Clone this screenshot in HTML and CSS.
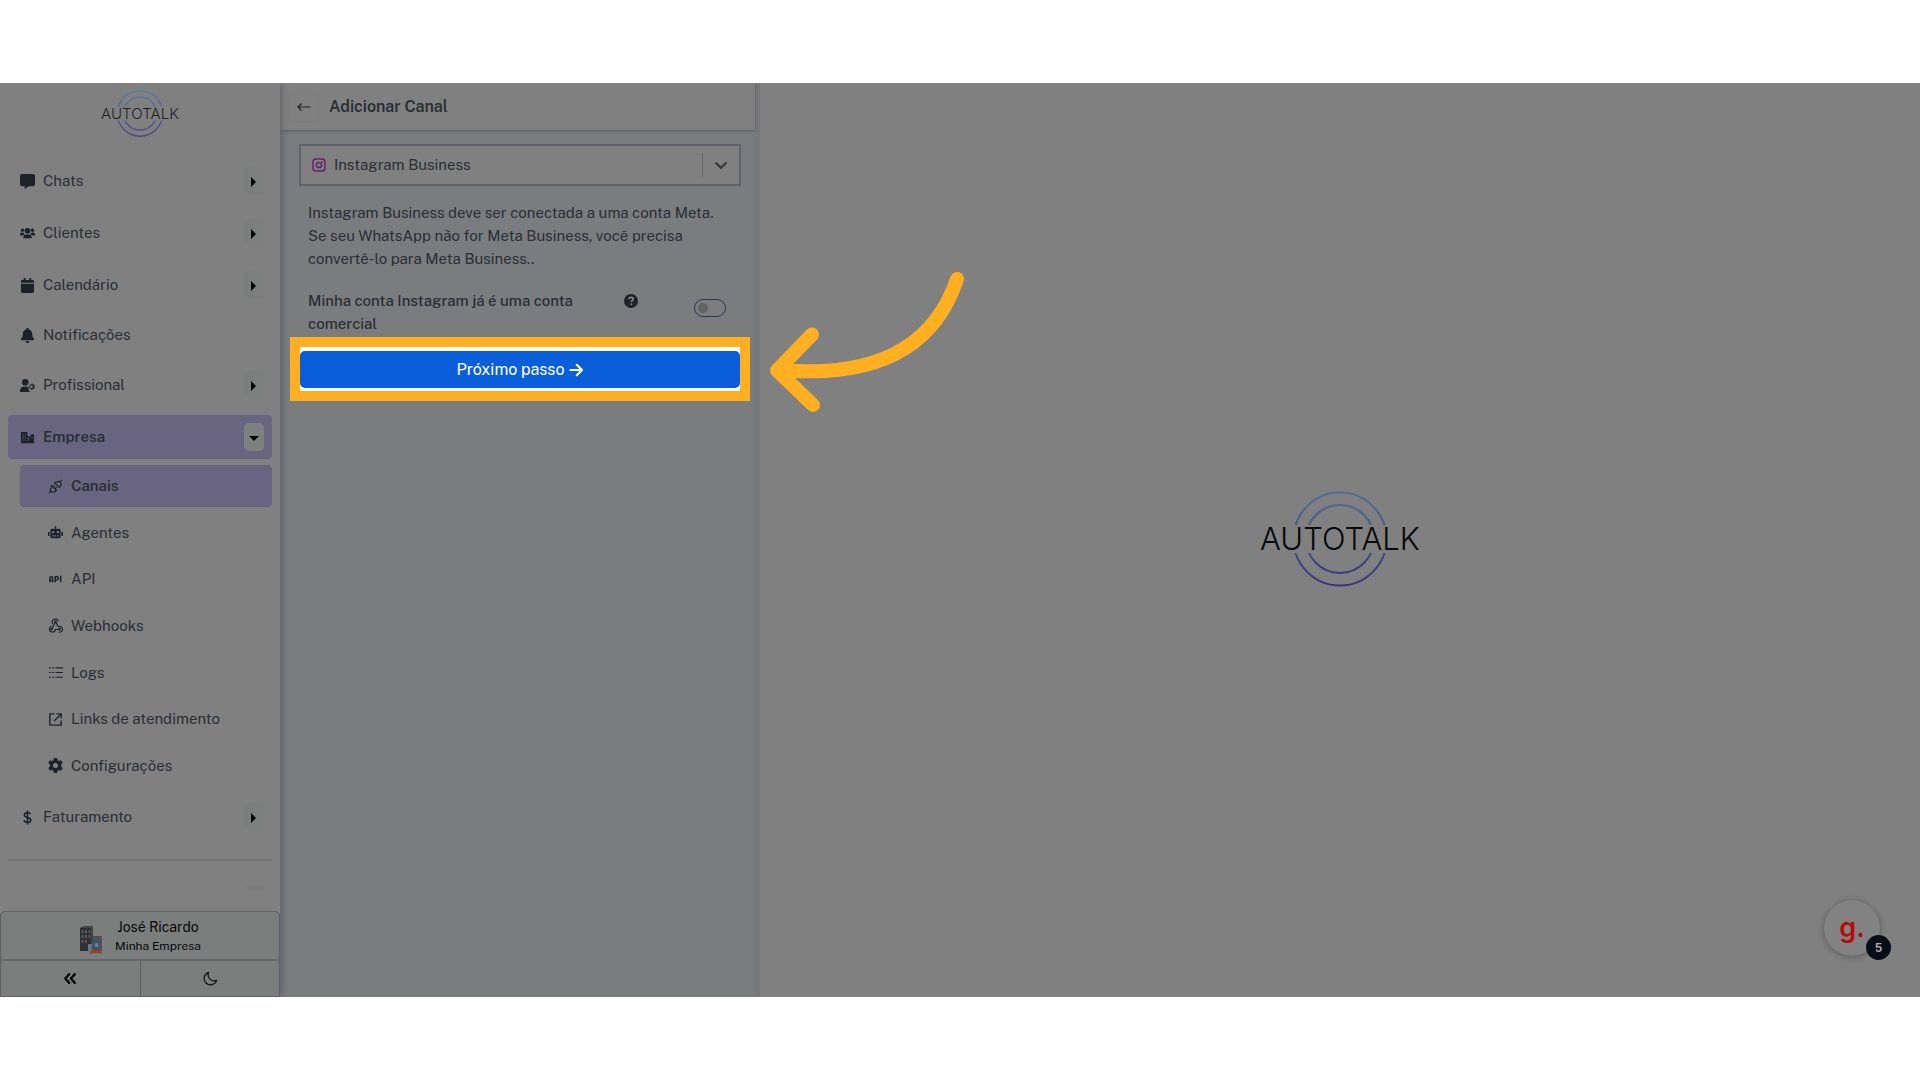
FILE: index.html
```html
<!DOCTYPE html>
<html lang="pt-BR">
<head>
<meta charset="utf-8">
<meta name="viewport" content="width=device-width, initial-scale=1">
<title>Autotalk - Adicionar Canal</title>
<link rel="stylesheet" href="styles.css">
</head>
<body>
<svg class="defs" aria-hidden="true">
  <defs>
    <linearGradient id="ring-dark" gradientUnits="userSpaceOnUse" x1="0" y1="2" x2="0" y2="98"><stop offset="0" stop-color="#4f6f94"/><stop offset="1" stop-color="#3a2f7c"/></linearGradient>
    <linearGradient id="ring-light" gradientUnits="userSpaceOnUse" x1="0" y1="2" x2="0" y2="98"><stop offset="0" stop-color="#5f7c9c"/><stop offset="1" stop-color="#4d4284"/></linearGradient>
    <clipPath id="ring-clip"><path d="M0 0h164v34H0zM0 62h164v38H0z"/></clipPath>
  </defs>
</svg>
<div class="stage">
  <aside class="sidebar">
    <a class="brand" href="#" aria-label="Autotalk">
      <svg class="logo logo-small" viewBox="0 0 164 98">
        <g clip-path="url(#ring-clip)" fill="none" stroke="url(#ring-light)" stroke-width="3"><circle cx="82" cy="48" r="46.500"/><circle cx="82" cy="48" r="34"/></g>
        <text x="82" y="59" text-anchor="middle">AUTOTALK</text>
      </svg>
    </a>
    <nav class="nav">
      <div class="item"><a href="#"><svg viewBox="0 0 16 16"><path d="M2 0h12a2 2 0 0 1 2 2v9a2 2 0 0 1-2 2H9l-4 3v-3H2a2 2 0 0 1-2-2V2a2 2 0 0 1 2-2z"/></svg>Chats</a><button class="caret" aria-label="Abrir Chats"></button></div>
      <div class="item"><a href="#"><svg viewBox="0 0 16 16"><circle cx="8" cy="5" r="3"/><circle cx="2.700" cy="4.500" r="1.800"/><circle cx="13.300" cy="4.500" r="1.800"/><path d="M3.500 13v-1.500A3 3 0 0 1 6.500 9h3a3 3 0 0 1 3 2.500V13zM0 10V9a2 2 0 0 1 2-2h1.500l1.500 1.500L3 10zM16 10V9a2 2 0 0 0-2-2h-1.500L11 8.500l2 1.500z"/></svg>Clientes</a><button class="caret" aria-label="Abrir Clientes"></button></div>
      <div class="item"><a href="#"><svg viewBox="0 0 16 16"><path d="M1 5V3.500A1.500 1.500 0 0 1 2.500 2H4V0h2v2h4V0h2v2h1.500A1.500 1.500 0 0 1 15 3.500V5zM1 6h14v8.500a1.500 1.500 0 0 1-1.500 1.500h-11A1.500 1.500 0 0 1 1 14.500z"/></svg>Calendário</a><button class="caret" aria-label="Abrir Calendário"></button></div>
      <div class="item plain"><a href="#"><svg viewBox="0 0 16 16"><path d="M7 0h2v1.200c2.300.5 4 2.400 4 4.800 0 3 .8 4 1.700 5 .7.900.2 2-.7 2H2c-.9 0-1.400-1.100-.7-2C2.200 10 3 9 3 6c0-2.400 1.700-4.300 4-4.800zM6 14h4a2 2 0 0 1-4 0z"/></svg>Notificações</a></div>
      <div class="item"><a href="#"><svg viewBox="0 0 16 16"><circle cx="5.600" cy="4.500" r="3.500"/><path d="M0 15v-1.500A4.500 4.500 0 0 1 4.500 9h2.300c.9 0 1.700.3 2.400.7-.5 1.700 0 3.800 1.300 5.300z"/><path fill-rule="evenodd" d="M12 6h1.500l.3 1.100 1.200-.3.900 1.400-.9.900.9 1-.9 1.500-1.200-.3-.3 1.200H12l-.4-1.200-1.100.3-.9-1.500.8-1-.8-.9.900-1.400 1.100.3zM12.700 7.900a1.400 1.400 0 1 0 0 2.700 1.400 1.400 0 0 0 0-2.700z"/></svg>Profissional</a><button class="caret" aria-label="Abrir Profissional"></button></div>
      <div class="item active"><a href="#"><svg viewBox="0 0 16 16"><path fill-rule="evenodd" d="M1 14V3a1 1 0 0 1 1-1h5a1 1 0 0 1 1 1v3.500h2V8l2-3.500h2a1 1 0 0 1 1 1V14zM2.800 4.500v1.200H4V4.500zm2.400 0v1.200h1.200V4.500zM2.800 7.200v1.200H4V7.200zm2.400 0v1.200h1.200V7.200zM2.800 10v1.200H4V10zm2.400 0v1.200h1.200V10zM12.300 7.500v1.200h1.200V7.500zM8.300 8v3.500h1V8z"/></svg>Empresa</a><button class="caret open" aria-label="Fechar Empresa"></button></div>
      <div class="submenu">
        <a class="sub active" href="#"><svg class="line" viewBox="0 0 16 16"><path d="M1 15l2.300-2.300M15 1l-2.300 2.300M4 7l5 5-1.500 1.300c-1.300 1.100-3 .8-4-.2s-1.300-2.700-.2-4zM7 4l5 5 1.300-1.500c1.100-1.300.8-3-.2-4s-2.700-1.300-4-.2zM5.500 8.500L7.300 6.700M7.500 10.500l1.800-1.800"/></svg>Canais</a>
        <a class="sub" href="#"><svg viewBox="0 0 16 16"><path fill-rule="evenodd" d="M7.300 1h1.400v3H12a1.500 1.500 0 0 1 1.500 1.500v7A1.500 1.500 0 0 1 12 14H4a1.500 1.500 0 0 1-1.500-1.500v-7A1.500 1.500 0 0 1 4 4h3.300zM5.500 6.500a1.200 1.200 0 1 0 0 2.400 1.200 1.200 0 0 0 0-2.400zm5 0a1.200 1.200 0 1 0 0 2.400 1.200 1.200 0 0 0 0-2.400zM4.500 11v1.200H6V11zm2.700 0v1.200h1.500V11zm2.600 0v1.200h1.500V11zM0 7.500h1.700v4.300H1a1 1 0 0 1-1-1zM16 7.500h-1.700v4.300h.7a1 1 0 0 0 1-1z"/></svg>Agentes</a>
        <a class="sub" href="#"><svg class="line" viewBox="0 0 16 16"><path stroke-width="1.600" d="M2 11V6.500a1.500 1.500 0 0 1 3 0V11M2 9h3M7.700 11V5h1.600a1.500 1.500 0 0 1 0 3.500H7.700M13.500 4v7"/></svg>API</a>
        <a class="sub" href="#"><svg class="line" viewBox="0 0 16 16"><path d="M5.200 6.500A3.300 3.300 0 1 1 11 3.700M8 4l3 5.300a3.100 3.100 0 1 1 .3 5.700M4 8.500a3.300 3.300 0 1 0 4.100 3.700h4.400M8 4L4.700 10.500l-1.500 1.700"/><circle cx="8" cy="4" r=".8"/><circle cx="3.700" cy="12" r=".8"/><circle cx="12.500" cy="12" r=".8"/></svg>Webhooks</a>
        <a class="sub" href="#"><svg class="line" viewBox="0 0 16 16"><path d="M1 3h2M1 8h2M1 13h2M4.500 3h2M4.500 8h2M4.500 13h2M8 3h8M8 8h8M8 13h8"/></svg>Logs</a>
        <a class="sub" href="#"><svg class="line" viewBox="0 0 16 16"><path stroke-width="1.500" d="M7 2H2v12h12V9M9 2h5v5M14 2L6.500 9.500"/></svg>Links de atendimento</a>
        <a class="sub" href="#"><svg viewBox="0 0 16 16"><path fill-rule="evenodd" d="M6.300 0h3.400l.6 2.300 1.400.8 2.300-.7 1.700 3L14 7v2l1.700 1.600-1.700 3-2.300-.7-1.400.8-.6 2.300H6.300l-.6-2.300-1.400-.8-2.300.7-1.700-3L2 9V7L.3 5.400l1.700-3 2.300.7 1.400-.8zM8 5.300a2.700 2.700 0 1 0 0 5.400 2.700 2.700 0 0 0 0-5.400z"/></svg>Configurações</a>
      </div>
      <div class="item"><a href="#"><svg class="line" viewBox="0 0 16 16"><path stroke-width="1.600" d="M11.300 4.600C10.800 3.300 9.700 2.700 8 2.700c-2 0-3.300 1-3.300 2.500C4.700 8.800 11.500 7 11.500 10.700c0 1.600-1.400 2.600-3.500 2.600-1.900 0-3.200-.8-3.600-2.300M8 .5v15"/></svg>Faturamento</a><button class="caret" aria-label="Abrir Faturamento"></button></div>
      <hr class="rule">
      <div class="item"><button class="caret" aria-label="Abrir mais"></button></div>
    </nav>
    <footer class="account">
      <a class="profile" href="#">
        <svg viewBox="0 0 24 30"><path fill="#454548" d="M1 3l3-2h10v25H1z"/><path fill="#303034" d="M1 3h11v23H1z"/><path fill="#56575e" d="M2.500 5h2v3h-2zm3.500 0h2v3H6zM2.500 10h2v3h-2zM6 10h2v3H6zm-3.500 5h2v3h-2zM6 15h2v3H6zm3.500-10h2v3h-2zm0 5h2v3h-2z"/><path fill="#515157" d="M14 11h9v15h-9z"/><path fill="#697782" d="M9 19h4v8H9z"/><path fill="#9c4414" d="M11 29c0-3 2-5 4-5h4c2 0 4 2 4 5l-4-1h-4z"/><path fill="#405365" d="M17.500 14c3 1 4 4 4 7 0 2-1 4-2 5h-4c-1-1-2-3-2-5 0-3 1-6 4-7z"/><circle cx="17.500" cy="20" r="2" fill="#71828e"/></svg>
        <span class="names"><span class="person">José Ricardo</span><span class="company">Minha Empresa</span></span>
      </a>
      <div class="tools">
        <button aria-label="Recolher menu"><svg viewBox="0 0 16 16" fill="none" stroke="#050505" stroke-width="2.700" stroke-linejoin="round" stroke-linecap="round"><path d="M6.500 3.500L2.500 8l4 4.500M12.500 3.500L8.500 8l4 4.500"/></svg></button>
        <button aria-label="Modo escuro"><svg viewBox="0 0 16 16" fill="none" stroke="#101214" stroke-width="1.300" stroke-linejoin="round"><path d="M6 1.500a6.500 6.500 0 0 0 8.500 8.500A6.800 6.800 0 1 1 6 1.500z"/></svg></button>
      </div>
    </footer>
  </aside>

  <section class="panel">
    <header class="panel-head">
      <button class="back" aria-label="Voltar"><svg viewBox="0 0 14 14" fill="none" stroke="#1c2024" stroke-width="1.200"><path d="M13.500 7H1M4.500 3.500L1 7l3.500 3.500"/></svg></button>
      <h1>Adicionar Canal</h1>
    </header>
    <form class="panel-body">
      <div class="picker">
        <svg class="insta" viewBox="0 0 14 14" fill="none" stroke="#64206a" stroke-width="1.500"><rect x="1" y="1" width="12" height="12" rx="3"/><circle cx="7" cy="7" r="2.600"/><path d="M10 4h1"/></svg>
        <select aria-label="Tipo de canal"><option>Instagram Business</option></select>
        <svg class="chevron" viewBox="0 0 12 12" fill="none" stroke="#373a3e" stroke-width="2" stroke-linecap="round"><path d="M2 4.500L6 8.500 10 4.500"/></svg>
      </div>
      <p class="info">Instagram Business deve ser conectada a uma conta Meta. Se seu WhatsApp não for Meta Business, você precisa convertê-lo para Meta Business..</p>
      <div class="option">
        <label for="comercial">Minha conta Instagram já é uma conta comercial</label>
        <svg class="help" viewBox="0 0 14 14"><circle cx="7" cy="7" r="7" fill="#1f2327"/><path d="M5 5.300C5 4 6 3.400 7.100 3.400s2.100.7 2.100 1.800c0 1.300-1.900 1.500-1.900 2.900" fill="none" stroke="#85868a" stroke-width="1.600"/><circle cx="7.300" cy="10.300" r="1" fill="#85868a"/></svg>
        <input id="comercial" class="switch" type="checkbox">
      </div>
      <div class="highlight">
        <button class="next" type="button">Próximo passo <svg viewBox="0 0 14 14" fill="none" stroke="#fff" stroke-width="2.200" stroke-linecap="round" stroke-linejoin="round"><path d="M1.500 7h11M7.800 1.800L13 7l-5.200 5.200"/></svg></button>
        <svg class="pointer" viewBox="0 0 196 144" fill="none" stroke="#ffb022" stroke-width="14" stroke-linecap="round" stroke-linejoin="round"><path d="M187 10C165 76 110 108 17 101.500M42 65.500L7 101.500 43 136"/></svg>
      </div>
    </form>
  </section>

  <main class="canvas">
    <svg class="logo logo-large" viewBox="0 0 164 98" role="img" aria-label="Autotalk">
      <g clip-path="url(#ring-clip)" fill="none" stroke="url(#ring-dark)" stroke-width="2"><circle cx="82" cy="48" r="46.500"/><circle cx="82" cy="48" r="34"/></g>
      <text x="82" y="59" text-anchor="middle">AUTOTALK</text>
    </svg>
  </main>

  <button class="widget">g.<span class="count">5</span></button>
</div>
</body>
</html>
```
FILE: styles.css
```css
* { box-sizing: border-box; }
body {
  margin: 0;
  padding: 83px 0;
  background: #fff;
  color: #2a2e34;
  font: 15px/22px "Public Sans", Inter, "Liberation Sans", sans-serif;
}
a { color: inherit; text-decoration: none; }
button, select { font: inherit; color: inherit; }
button { padding: 0; border: 0; cursor: pointer; }
.defs { position: absolute; width: 0; height: 0; }

.stage {
  position: relative;
  display: flex;
  height: calc(100vh - 166px);
  overflow: hidden;
  background: #808080;
}

/* Sidebar */
.sidebar {
  z-index: 1;
  flex: 0 0 280px;
  display: flex;
  flex-direction: column;
  background: #808080;
  box-shadow: 2px 0 6px rgba(50, 45, 80, .35);
}
.brand {
  flex: 0 0 76px;
  display: flex;
  justify-content: center;
  align-items: flex-start;
  padding-top: 7px;
}
.logo text { font: 300 31px Inter, sans-serif; fill: #08090a; }
.logo-small { width: 80px; height: 48px; }
.logo-small text { fill: #222; }
.logo-large { width: 164px; height: 98px; }

.nav {
  flex: 1 1 0;
  min-height: 0;
  overflow: hidden;
  display: flex;
  flex-direction: column;
  gap: 8px;
  padding: 0 8px;
  margin-bottom: 21px;
}
.item {
  flex: 0 0 44px;
  display: flex;
  align-items: center;
  justify-content: flex-end;
  padding: 0 8px 0 12px;
  border-radius: 4px;
}
.item.plain { flex-basis: 40px; }
.item a { flex: 1; display: flex; align-items: center; gap: 8px; }
.item svg, .sub svg { width: 15px; height: 15px; fill: #1d2229; }
.item svg.line, .sub svg.line { fill: none; stroke: #1d2229; stroke-width: 1.2; }
.active { background: #696580; font-weight: 600; }
.caret {
  display: grid;
  place-items: center;
  width: 20px;
  height: 28px;
  padding: 2px 1px 0 0;
  border-radius: 5px;
  background: #7d7f7e;
}
.caret::before {
  content: "";
  border: solid transparent;
  border-width: 5px 0 5px 5px;
  border-left-color: #000;
}
.caret.open { background: #7e807f; }
.caret.open::before {
  border-width: 5px 5px 0;
  border-color: #000 transparent;
}
.submenu {
  flex: 0 0 322px;
  display: flex;
  flex-direction: column;
  justify-content: space-between;
  margin: -2px 0 0 12px;
}
.sub {
  display: flex;
  align-items: center;
  gap: 8px;
  height: 42px;
  padding-left: 28px;
  border-radius: 4px;
}
.rule {
  flex: none;
  width: 100%;
  margin: 12px 0 8px;
  border: 0;
  border-top: 2px solid #747577;
}

.account {
  border: 1px solid #606167;
  border-radius: 5px 5px 0 0;
  background: #7b7e7c;
  color: #08090a;
}
.profile {
  display: flex;
  align-items: center;
  justify-content: center;
  gap: 12px;
  height: 47px;
}
.profile svg { width: 24px; height: 30px; margin-top: 8px; }
.names { display: flex; flex-direction: column; text-align: center; }
.person { font-size: 14px; line-height: 20px; }
.company { font-size: 12px; line-height: 18px; }
.tools {
  display: grid;
  grid-template-columns: 1fr 1fr;
  height: 37px;
  border-top: 2px solid #65666c;
}
.tools button { display: grid; place-items: center; background: none; }
.tools button + button { border-left: 1px solid #606167; }
.tools svg { width: 15px; height: 15px; }

/* Channel form */
.panel {
  flex: 0 0 480px;
  display: flex;
  flex-direction: column;
  border-right: 5px solid #77787a;
  background: #7b7c7e;
}
.panel-head {
  display: flex;
  align-items: center;
  gap: 10px;
  height: 47px;
  padding-left: 9px;
  background: #808080;
  box-shadow: 0 1px 3px rgba(50, 50, 60, .4);
}
.back {
  display: grid;
  place-items: center;
  width: 30px;
  height: 30px;
  border: 1px solid #7d7d7e;
  border-radius: 4px;
  background: none;
}
.back svg { width: 14px; height: 14px; }
h1 { margin: 0; font-size: 16px; line-height: 22px; font-weight: 600; }
.panel-body { padding: 14px 5px 0 10px; }
.picker {
  display: flex;
  align-items: center;
  height: 42px;
  margin: 0 9px;
  border: 2px solid #606069;
  background: #808080;
}
.insta { width: 14px; height: 14px; margin: 0 8px 0 11px; }
.picker select {
  flex: 1;
  height: 24px;
  padding: 0;
  border: 0;
  border-right: 1px solid #66676a;
  background: none;
  appearance: none;
}
.chevron { width: 14px; height: 14px; margin: 0 11px; }
.info { margin: 15px 18px 0; line-height: 23px; }
.option {
  display: flex;
  align-items: flex-start;
  margin: 19px 18px 0;
  line-height: 23px;
}
.option label { flex: 0 1 300px; font-weight: 500; }
.help { width: 14px; height: 14px; margin: 5px auto 0 16px; }
.switch {
  display: grid;
  align-items: center;
  width: 32px;
  height: 18px;
  margin: 10px 6px 0 0;
  padding-left: 3px;
  border: 1px solid #29394a;
  border-radius: 9px;
  background: #7d7d7f;
  appearance: none;
}
.switch::before {
  content: "";
  width: 10px;
  height: 10px;
  border-radius: 50%;
  background: #636364;
}
.highlight {
  position: relative;
  margin-top: 2px;
  padding: 4px 0 3px;
  border: 10px solid #ffb022;
  background: #fff;
}
.next {
  display: flex;
  align-items: center;
  justify-content: center;
  gap: 5px;
  width: 100%;
  height: 37px;
  border-radius: 5px;
  background: #0b5ed9;
  color: #fff;
  font-size: 16px;
}
.next svg { width: 14px; height: 14px; }
.pointer {
  position: absolute;
  top: -78px;
  left: 470px;
  width: 196px;
  height: 144px;
}

.canvas { flex: 1; display: grid; place-items: center; }

/* Floating help widget */
.widget {
  position: absolute;
  right: 40px;
  bottom: 41px;
  width: 56px;
  height: 56px;
  border-radius: 50%;
  background: #828282;
  box-shadow: 0 1px 6px rgba(0, 0, 0, .3);
  color: #b40a0a;
  font: 600 27px/48px Inter, sans-serif;
}
.count {
  position: absolute;
  right: -11px;
  bottom: -4px;
  width: 25px;
  height: 25px;
  border-radius: 50%;
  background: #080e18;
  color: #b4b4b4;
  font: 600 12px/25px Inter, sans-serif;
}
```
